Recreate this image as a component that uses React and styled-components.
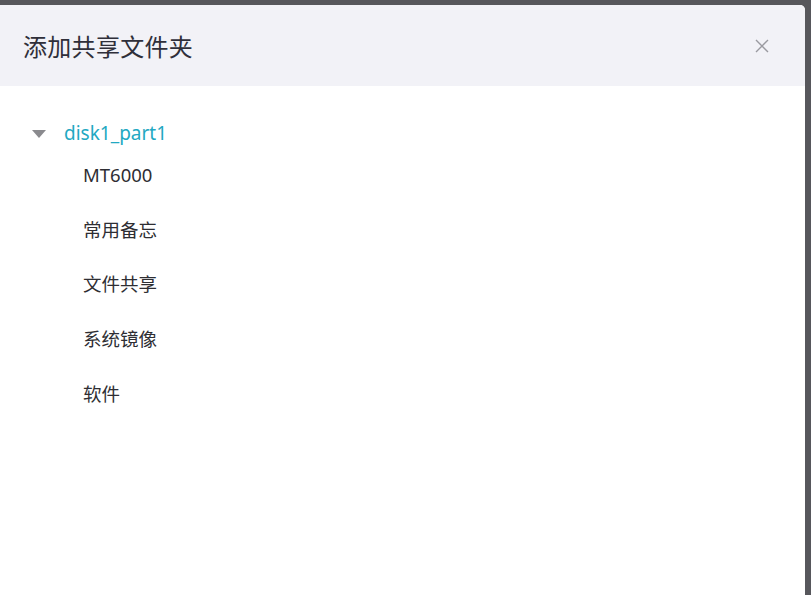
import React from "react";
import styled, { createGlobalStyle } from "styled-components";

const Global = createGlobalStyle`
  html, body { margin: 0; padding: 0; height: 100%; }
  body {
    background: #57575c;
    font-family: "Noto Sans", "Noto Sans CJK SC", sans-serif;
    overflow: hidden;
  }
  #root { height: 100%; }
`;

const Backdrop = styled.div`
  height: 595px;
  box-sizing: border-box;
  padding: 5px 6px 0 0;
  display: flex;
  background: #57575c;
`;

const Dialog = styled.div`
  flex: 1;
  display: flex;
  flex-direction: column;
  background: #ffffff;
  border-radius: 0 5px 0 0;
  overflow: hidden;
`;

const Header = styled.div`
  height: 81px;
  flex: none;
  display: flex;
  align-items: center;
  justify-content: space-between;
  padding: 0 33px 0 23px;
  background: #f2f2f7;
`;

const Title = styled.h2`
  margin: 0;
  font-family: "Noto Sans CJK SC", sans-serif;
  font-size: 24px;
  font-weight: 400;
  color: #2f2f3a;
  letter-spacing: 0.3px;
`;

const CloseButton = styled.button`
  width: 20px;
  height: 20px;
  padding: 0;
  border: none;
  background: transparent;
  display: flex;
  align-items: center;
  justify-content: center;
  cursor: pointer;
`;

const Body = styled.div`
  flex: 1;
  padding: 28px 0 0 32px;
`;

const RootRow = styled.div`
  display: flex;
  align-items: center;
  height: 40px;
  gap: 18px;
`;

const Caret = styled.span`
  width: 0;
  height: 0;
  border-left: 7px solid transparent;
  border-right: 7px solid transparent;
  border-top: 8px solid #8a8a8e;
`;

const RootLabel = styled.span`
  font-size: 19px;
  color: #22a8c2;
  font-family: "Noto Sans", "Noto Sans CJK SC", sans-serif;
  line-height: 1;
  position: relative;
  top: -1px;
`;

const Children = styled.ul`
  list-style: none;
  margin: 6px 0 0 0;
  padding: 0 0 0 51px;
  display: flex;
  flex-direction: column;
  gap: 24.7px;
`;

const Child = styled.li`
  height: 30px;
  line-height: 30px;
  font-size: 18.5px;
  color: #2e2e33;
  font-family: "Noto Sans", "Noto Sans CJK SC", sans-serif;
`;

const items = ["MT6000", "常用备忘", "文件共享", "系统镜像", "软件"];

export default function App() {
  return (
    <>
      <Global />
      <Backdrop>
        <Dialog>
          <Header>
            <Title>添加共享文件夹</Title>
            <CloseButton aria-label="close">
              <svg width="14" height="14" viewBox="0 0 14 14">
                <path d="M1 1 L13 13 M13 1 L1 13" stroke="#9a9aa0" strokeWidth="1.4" fill="none" />
              </svg>
            </CloseButton>
          </Header>
          <Body>
            <RootRow>
              <Caret />
              <RootLabel>disk1_part1</RootLabel>
            </RootRow>
            <Children>
              {items.map((t) => (
                <Child key={t}>{t}</Child>
              ))}
            </Children>
          </Body>
        </Dialog>
      </Backdrop>
    </>
  );
}
